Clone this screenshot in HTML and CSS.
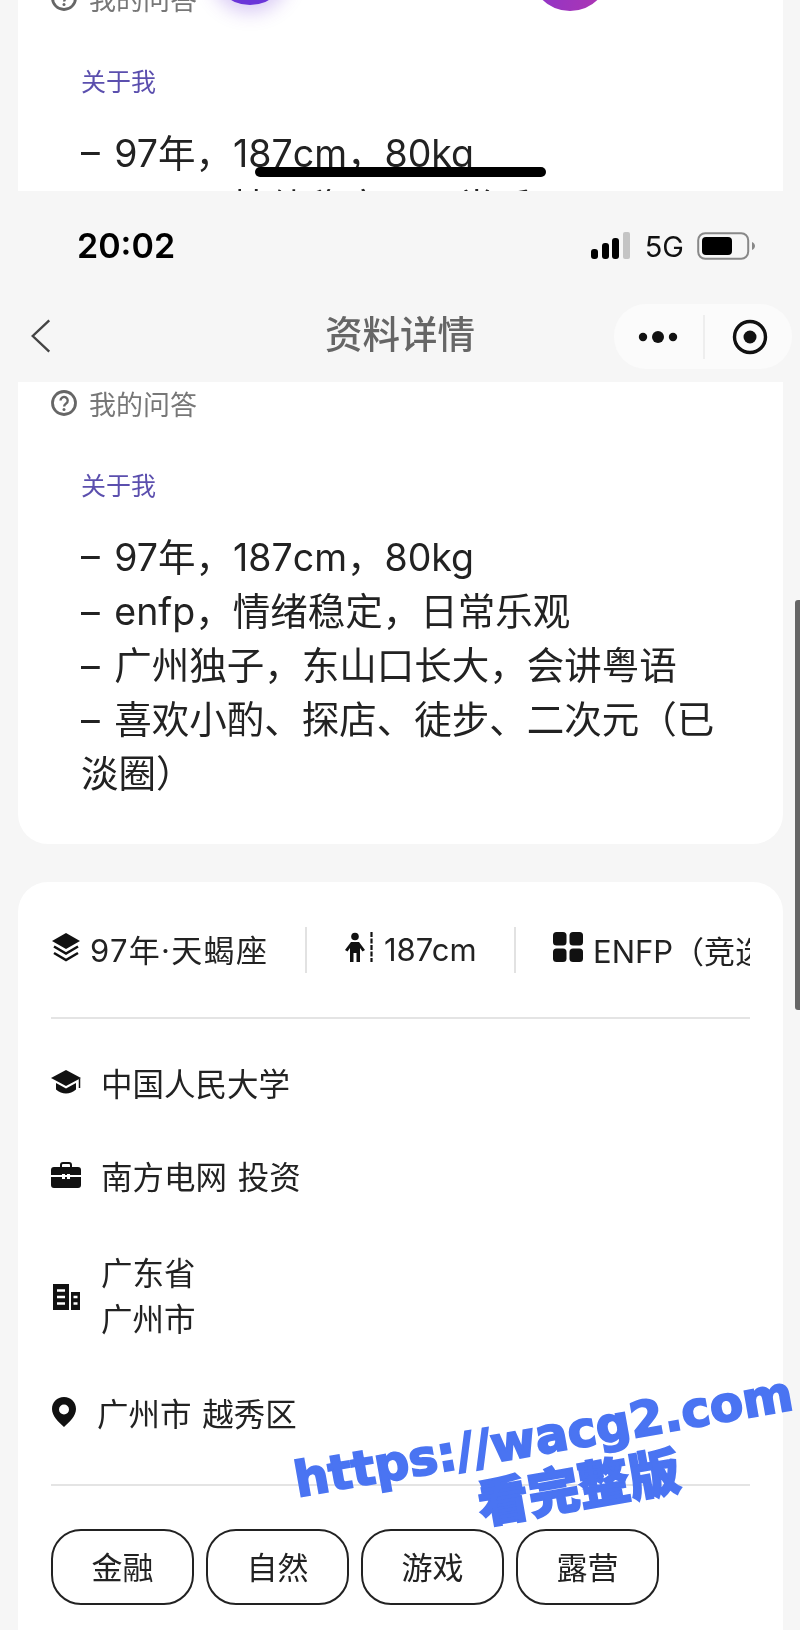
FILE: index.html
```html
<!DOCTYPE html>
<html lang="zh">
<head>
<meta charset="utf-8">
<title>资料详情</title>
<link rel="stylesheet" href="styles.css">
</head>
<body>
<div class="page">
  <section class="frag">
    <div class="frag-card soft">
      <div class="ask ask-top">
        <svg class="ask-icon" viewBox="0 0 28 28"><circle cx="14" cy="14" r="11.5" fill="none" stroke="#666" stroke-width="2.8"/><path d="M10.5 11.5a3.6 3.6 0 1 1 5.6 3c-1.3.9-2 1.4-2 3" fill="none" stroke="#666" stroke-width="2.4"/><circle cx="14" cy="20.5" r="1.5" fill="#666"/></svg>
        <span>我的问答</span>
      </div>
      <span class="orb orb-a"></span>
      <span class="orb orb-b"></span>
      <h3 class="about-title about-top">关于我</h3>
      <p class="about-text">– 97年，187cm，80kg<br>– enfp，情绪稳定，日常乐观</p>
    </div>
    <span class="home-bar"></span>
  </section>

  <header class="top soft">
    <div class="status">
      <span class="time">20:02</span>
      <div class="status-right">
        <svg class="signal" viewBox="0 0 42 28"><rect x="1" y="17" width="7" height="10" rx="3" fill="#000"/><rect x="12" y="11" width="7" height="16" rx="3" fill="#000"/><rect x="22" y="6" width="7" height="21" rx="3" fill="#000"/><rect x="33" y="0" width="7" height="27" rx="2" fill="#c4c4c4"/></svg>
        <span class="net">5G</span>
        <svg class="battery" viewBox="0 0 58 28"><rect x="1.2" y="1.2" width="50" height="25.6" rx="7" fill="none" stroke="#888" stroke-width="2"/><rect x="5" y="5" width="30" height="18" rx="4" fill="#000"/><path d="M55 10c2 1 3 2.5 3 4s-1 3-3 4z" fill="#888"/></svg>
      </div>
    </div>
    <nav class="nav">
      <svg class="back" viewBox="0 0 24 38"><path d="M21 2 3 19l18 17" fill="none" stroke="#444" stroke-width="2.6"/></svg>
      <h1 class="nav-title">资料详情</h1>
      <div class="capsule">
        <svg class="dots" viewBox="0 0 40 14"><circle cx="5" cy="7" r="4.2" fill="#111"/><circle cx="20" cy="7" r="6" fill="#111"/><circle cx="35" cy="7" r="4.2" fill="#111"/></svg>
        <i class="cap-line"></i>
        <svg class="target" viewBox="0 0 36 36"><circle cx="18" cy="18" r="15.5" fill="none" stroke="#111" stroke-width="3.4"/><circle cx="18" cy="18" r="6.5" fill="#111"/></svg>
      </div>
    </nav>
  </header>

  <section class="card card-about soft">
    <div class="ask">
      <svg class="ask-icon" viewBox="0 0 28 28"><circle cx="14" cy="14" r="11.5" fill="none" stroke="#666" stroke-width="2.8"/><path d="M10.5 11.5a3.6 3.6 0 1 1 5.6 3c-1.3.9-2 1.4-2 3" fill="none" stroke="#666" stroke-width="2.4"/><circle cx="14" cy="20.5" r="1.5" fill="#666"/></svg>
      <span>我的问答</span>
    </div>
    <h3 class="about-title">关于我</h3>
    <p class="about-text">– 97年，187cm，80kg<br>– enfp，情绪稳定，日常乐观<br>– 广州独子，东山口长大，会讲粤语<br>– 喜欢小酌、探店、徒步、二次元（已淡圈）</p>
  </section>

  <section class="card card-info soft">
    <div class="attrs">
      <div class="attr attr-a">
        <svg class="ic-attr" viewBox="0 0 30 30"><path d="M15 1 29 9l-14 8L1 9z" fill="#111"/><path d="M3 14.5l12 7 12-7M3 21l12 7 12-7" fill="none" stroke="#111" stroke-width="2.6"/></svg>
        <span class="zodiac">97年·天蝎座</span>
      </div>
      <div class="attr attr-b">
        <svg class="ic-attr" viewBox="0 0 30 30"><circle cx="11" cy="4.5" r="3.8" fill="#111"/><path d="M1 18 7 10h8l6 8-2.500 1.500L16 16v14h-3.500v-9h-3v9H6V16l-2.500 3.500z" fill="#111"/><path d="M27.500 0v30" stroke="#111" stroke-width="2.200" stroke-dasharray="5 1.500"/></svg>
        <span>187cm</span>
      </div>
      <div class="attr attr-c">
        <svg class="ic-attr" viewBox="0 0 30 30"><rect x="0" y="0" width="13.500" height="13.500" rx="3.500" fill="#111"/><rect x="16.500" y="0" width="13.500" height="13.500" rx="3.500" fill="#111"/><rect x="0" y="16.500" width="13.500" height="13.500" rx="3.500" fill="#111"/><rect x="16.500" y="16.500" width="13.500" height="13.500" rx="3.500" fill="#111"/></svg>
        <span class="nowrap">ENFP（竞选者）</span>
      </div>
    </div>
    <div class="rows">
      <div class="row row-edu">
        <svg class="ic-row" viewBox="0 0 30 26"><path d="M15 1 30 9l-15 8L0 9z" fill="#111"/><path d="M5 14v6.500c3 2.700 6.500 4 10 4s7-1.300 10-4V14l-10 5.500z" fill="#111"/><path d="M28.500 9.500V19" stroke="#111" stroke-width="1.500"/></svg>
        <span>中国人民大学</span>
      </div>
      <div class="row row-job">
        <svg class="ic-row" viewBox="0 0 30 26"><path d="M10 5V3a2 2 0 0 1 2-2h6a2 2 0 0 1 2 2v2" fill="none" stroke="#111" stroke-width="2"/><path d="M0 8a3 3 0 0 1 3-3h24a3 3 0 0 1 3 3v5H19v-1h-3v1h-2v-1h-3v1H0z" fill="#111"/><path d="M0 15h11v2h3v-2h2v2h3v-2h11v8a3 3 0 0 1-3 3H3a3 3 0 0 1-3-3z" fill="#111"/></svg>
        <span>南方电网 投资</span>
      </div>
      <div class="row row-loc">
        <svg class="ic-bld" viewBox="0 0 27 26"><path d="M0 0h16v26H0z" fill="#111"/><path d="M18 8h9v18h-9z" fill="#111"/><path d="M4 6.500h8M4 13h8M4 19.500h8M20.500 13h4M20.500 19.500h4" stroke="#fff" stroke-width="2.600"/></svg>
        <span class="two">广东省<br>广州市</span>
      </div>
      <div class="row row-pin">
        <svg class="ic-pin" viewBox="0 0 26 30"><path fill-rule="evenodd" d="M13 0C6 0 1 5.200 1 12c0 7 6.500 13 12 18 5.500-5 12-11 12-18C25 5.200 20 0 13 0zm0 7.500a5 5 0 1 1 0 10 5 5 0 0 1 0-10z" fill="#111"/></svg>
        <span>广州市 越秀区</span>
      </div>
    </div>
    <div class="tags">
      <span class="tag">金融</span>
      <span class="tag">自然</span>
      <span class="tag">游戏</span>
      <span class="tag">露营</span>
    </div>
  </section>

  <i class="scrollbar"></i>
  <div class="watermark">
    <span class="wm-url">https://wacg2.com</span>
    <span class="wm-cta">看完整版</span>
  </div>
</div>
</body>
</html>
```

FILE: styles.css
```css
* { box-sizing: border-box; }
html, body { margin: 0; padding: 0; }
body {
  font-family: "Inter", "Noto Sans CJK SC", "Liberation Sans", sans-serif;
  color: #111;
  background: #f6f6f6;
}
h1, h3, p { margin: 0; font-weight: 400; }
.page {
  position: relative;
  width: 800px;
  height: 1630px;
  overflow: hidden;
  background: #f6f6f6;
}
.soft { filter: blur(.45px); }

/* clipped fragment at the very top */
.frag { position: relative; height: 191px; overflow: hidden; }
.frag-card {
  position: relative;
  margin: -24px 17px 0 18px;
  height: 215px;
  background: #fff;
  padding: 0 33px 0 32px;
}
.ask {
  display: flex;
  align-items: center;
  gap: 11px;
  height: 44px;
  font-size: 27px;
  color: #777;
}
.ask-icon { width: 28px; height: 28px; flex: none; }
.orb {
  position: absolute;
  width: 80px;
  height: 80px;
  border-radius: 50%;
}
.orb-a { left: 192px; top: -51px; background: #6a35d8; box-shadow: 0 8px 18px rgba(106, 53, 216, .25); }
.orb-b { left: 512px; top: -45px; background: linear-gradient(100deg, #8a35cc, #b035b0); }
.about-title { font-size: 25px; line-height: 34px; color: #5b4fae; padding-left: 31px; }
.about-top { margin-top: 45px; }
.about-text {
  margin-top: 28px;
  padding-left: 31px;
  font-size: 37.5px;
  line-height: 54px;
  color: #222;
  word-spacing: 4px;
}
.home-bar {
  position: absolute;
  left: 255px;
  top: 167px;
  width: 291px;
  height: 10px;
  border-radius: 5px;
  background: #000;
}

/* status + nav */
.top { height: 191px; background: #f6f6f6; }
.status {
  height: 105px;
  padding: 0 45px 0 77px;
  display: flex;
  align-items: flex-start;
  justify-content: space-between;
}
.time { margin-top: 30px; font-size: 34px; line-height: 50px; font-weight: 600; color: #000; }
.status-right { margin-top: 35px; display: flex; align-items: center; gap: 13px; height: 40px; }
.signal { width: 42px; height: 28px; }
.net { font-size: 29px; color: #111; }
.battery { width: 58px; height: 28px; }
.nav {
  position: relative;
  height: 86px;
  display: flex;
  align-items: center;
  justify-content: center;
  padding-bottom: 9px;
}
.back { position: absolute; left: 30px; top: 22px; width: 22px; height: 36px; }
.nav-title { font-size: 37.5px; line-height: 50px; font-weight: 500; color: #666; }
.capsule {
  position: absolute;
  left: 614px;
  top: 8px;
  width: 178px;
  height: 65px;
  border-radius: 32px;
  background: #fbfbfb;
  display: flex;
  align-items: center;
  padding-left: 24px;
}
.dots { width: 40px; height: 14px; }
.cap-line { width: 2px; height: 44px; margin-left: 25px; background: #eee; }
.target { width: 36px; height: 36px; margin-left: 27px; }

/* cards */
.card { margin: 0 17px 0 18px; background: #fff; padding: 0 33px; }
.card-about {
  height: 462px;
  padding-left: 32px;
  border-radius: 0 0 30px 30px;
}
.card-about .ask { height: 42px; }
.card-about .about-title { margin-top: 45px; }
.card-about .about-text { margin-top: 28px; width: 691px; padding-right: 20px; }
.card-info {
  margin-top: 38px;
  height: 770px;
  border-radius: 30px 30px 0 0;
}
.attrs {
  height: 137px;
  display: flex;
  align-items: center;
  overflow: hidden;
  border-bottom: 2px solid #e4e4e4;
  font-size: 31px;
  color: #222;
}
.attr { display: flex; align-items: center; gap: 10px; height: 46px; flex: none; }
.attr-a { width: 256px; border-right: 2px solid #e2e2e2; }
.attr-b { width: 209px; padding-left: 37px; border-right: 2px solid #e2e2e2; }
.attr-c { padding-left: 37px; }
.zodiac { letter-spacing: 1.3px; margin-top: -3px; margin-left: -1px; }
.nowrap { white-space: nowrap; }
.ic-attr { width: 30px; height: 30px; flex: none; margin-top: -6px; }
.rows {
  height: 467px;
  padding-top: 40px;
  border-bottom: 2px solid #e4e4e4;
  font-size: 31.5px;
  color: #222;
  word-spacing: 2px;
}
.row { display: flex; align-items: center; gap: 20px; height: 46px; }
.row-job { margin-top: 47px; }
.row-loc { margin-top: 53px; height: 92px; }
.row-pin { margin-top: 46px; }
.two { line-height: 46px; }
.ic-row { width: 30px; height: 26px; flex: none; }
.ic-bld { width: 27px; height: 26px; flex: none; margin: 0 1px 0 2px; }
.ic-pin { width: 26px; height: 30px; flex: none; }
.tags { display: flex; gap: 12px; margin-top: 43px; }
.tag {
  width: 143px;
  height: 76px;
  padding-bottom: 3px;
  border: 2px solid #222;
  border-radius: 30px;
  display: flex;
  align-items: center;
  justify-content: center;
  font-size: 31px;
  color: #222;
}

.scrollbar {
  position: absolute;
  left: 795px;
  top: 600px;
  width: 5px;
  height: 410px;
  background: #666;
  border-radius: 3px 0 0 3px;
}

.watermark {
  position: absolute;
  left: 278px;
  top: 1410px;
  width: 540px;
  color: #4a74f2;
  text-align: center;
  transform: rotate(-10deg);
  display: flex;
  flex-direction: column;
  align-items: center;
}
.wm-url {
  font-family: "DejaVu Sans", sans-serif;
  font-weight: 700;
  font-size: 48.5px;
  line-height: 52px;
  white-space: nowrap;
  -webkit-text-stroke: 2px #4a74f2;
}
.wm-cta {
  font-family: "Noto Sans CJK SC", sans-serif;
  font-weight: 900;
  font-size: 51px;
  line-height: 54px;
  margin-left: 52px;
  -webkit-text-stroke: 2px #4a74f2;
}
```
